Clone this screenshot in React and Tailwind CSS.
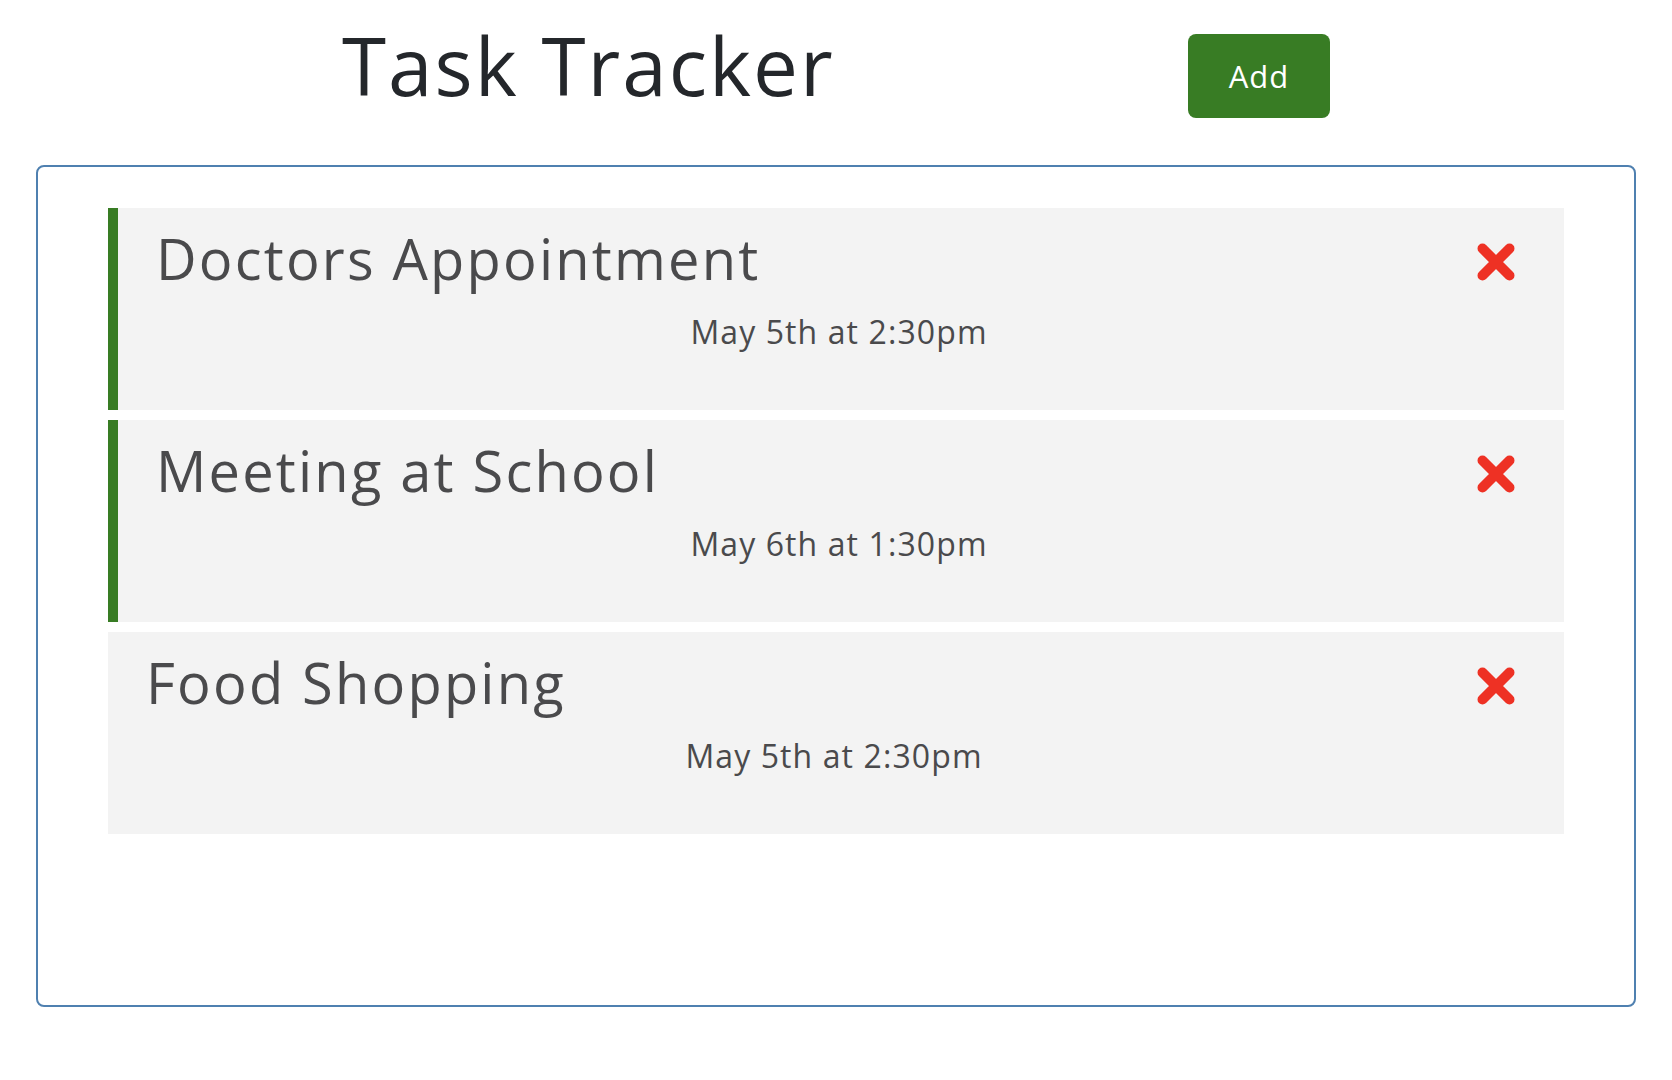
const tasks = [
    { id: 1, text: 'Doctors Appointment', day: 'May 5th at 2:30pm', reminder: true },
    { id: 2, text: 'Meeting at School', day: 'May 6th at 1:30pm', reminder: true },
    { id: 3, text: 'Food Shopping', day: 'May 5th at 2:30pm', reminder: false },
];

function CloseIcon() {
    return (
        <svg width="38" height="38" viewBox="0 0 38 38" className="mt-[13px] mr-[7px] shrink-0 cursor-pointer">
            <path d="M5.5 5.5 L32.5 32.5 M32.5 5.5 L5.5 32.5" stroke="#ee3124" strokeWidth="10" strokeLinecap="round" fill="none" />
        </svg>
    );
}

function Task({ task }) {
    return (
        <div
            className={`bg-[#f3f3f3] pt-[22px] pb-[62px] pl-[38px] pr-[42px] ${task.reminder ? 'border-l-[10px] border-[#387c24]' : ''}`}
        >
            <div className="flex items-start justify-between">
                <h3 className="text-[56px] leading-none font-normal tracking-[2.2px] text-[#4a4a4c]">{task.text}</h3>
                <CloseIcon />
            </div>
            <p className="mt-[30px] text-center text-[32px] leading-none tracking-[1.1px] text-[#4a4a4c]">{task.day}</p>
        </div>
    );
}

export default function App() {
    return (
        <div className="min-h-screen bg-white font-['Open_Sans',sans-serif]">
            {/* Header */}
            <header className="mx-auto flex w-[988px] items-start justify-between">
                <h1 className="mt-[25px] text-[80px] leading-none font-normal tracking-[2px] text-[#24272b]">Task Tracker</h1>
                <button className="mt-[34px] h-[84px] w-[142px] rounded-[8px] bg-[#387c24] text-[31px] tracking-[1px] text-white">
                    Add
                </button>
            </header>

            {/* Task list */}
            <div className="mx-[36px] mt-[47px] h-[842px] rounded-[8px] border-2 border-[#4f80b0] px-[70px] pt-[41px]">
                <div className="flex flex-col gap-[10px]">
                    {tasks.map((task) => (
                        <Task key={task.id} task={task} />
                    ))}
                </div>
            </div>
        </div>
    );
}
